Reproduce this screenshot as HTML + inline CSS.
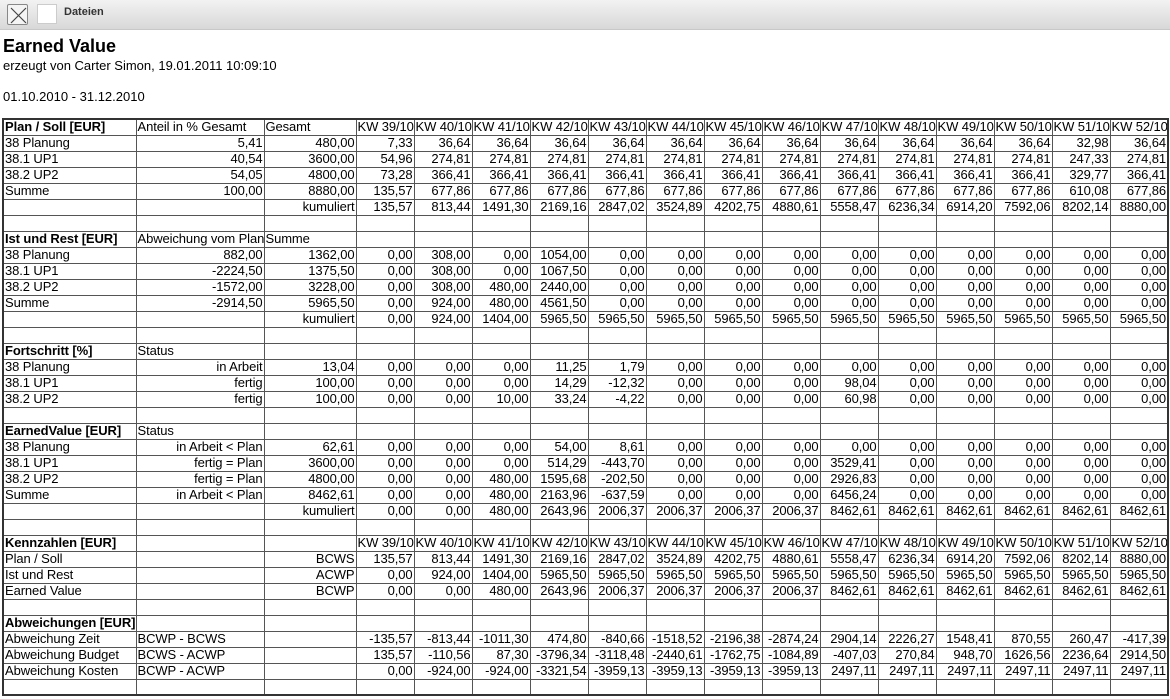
<!DOCTYPE html>
<html><head><meta charset="utf-8">
<style>
*{margin:0;padding:0;box-sizing:border-box}
body{width:1170px;height:699px;overflow:hidden;background:#fff;font-family:"Liberation Sans",sans-serif;font-size:13px;color:#000;position:relative}
.tb{position:absolute;left:0;top:0;width:1170px;height:30px;background:linear-gradient(#f2f2f2,#d8d8d8);border-bottom:1px solid #c8c8c8}
.xb{position:absolute;left:7px;top:4px;width:21px;height:21px;border:1px solid #888;background:#f4f4f4;border-radius:2px}
.wb{position:absolute;left:37px;top:4px;width:20px;height:20px;background:#fff;border:1px solid #ccc}
.tb span{position:absolute;left:64px;top:6px;font-size:11px;font-weight:bold;color:#333}
h1{position:absolute;left:3px;top:36px;font-size:18px;font-weight:bold}
.s1{position:absolute;left:3px;top:58px}
.s2{position:absolute;left:3px;top:89px}
table{position:absolute;left:2px;top:118px;width:1166px;border-collapse:collapse;table-layout:fixed;border:2px solid #333}
td{border:1px solid #555;height:16px;line-height:14px;padding:0 1px;white-space:nowrap;overflow:hidden;text-align:right;letter-spacing:-0.1px}
td.l{text-align:left}
b{font-weight:bold}
</style></head><body>
<div class="tb"><div class="xb"><svg width="21" height="21"><path d="M3 3L18 18M18 3L3 18" stroke="#444" stroke-width="1.2"/></svg></div><div class="wb"></div><span>Dateien</span></div>
<h1>Earned Value</h1>
<div class="s1">erzeugt von Carter Simon, 19.01.2011 10:09:10</div>
<div class="s2">01.10.2010 - 31.12.2010</div>
<table>
<colgroup><col style="width:133px"><col style="width:128px"><col style="width:92px"><col style="width:58px"><col style="width:58px"><col style="width:58px"><col style="width:58px"><col style="width:58px"><col style="width:58px"><col style="width:58px"><col style="width:58px"><col style="width:58px"><col style="width:58px"><col style="width:58px"><col style="width:58px"><col style="width:58px"><col style="width:58px"></colgroup>
<tr><td class="l"><b>Plan / Soll [EUR]</b></td><td class="l">Anteil in % Gesamt</td><td class="l">Gesamt</td><td>KW 39/10</td><td>KW 40/10</td><td>KW 41/10</td><td>KW 42/10</td><td>KW 43/10</td><td>KW 44/10</td><td>KW 45/10</td><td>KW 46/10</td><td>KW 47/10</td><td>KW 48/10</td><td>KW 49/10</td><td>KW 50/10</td><td>KW 51/10</td><td>KW 52/10</td></tr>
<tr><td class="l">38 Planung</td><td>5,41</td><td>480,00</td><td>7,33</td><td>36,64</td><td>36,64</td><td>36,64</td><td>36,64</td><td>36,64</td><td>36,64</td><td>36,64</td><td>36,64</td><td>36,64</td><td>36,64</td><td>36,64</td><td>32,98</td><td>36,64</td></tr>
<tr><td class="l">38.1 UP1</td><td>40,54</td><td>3600,00</td><td>54,96</td><td>274,81</td><td>274,81</td><td>274,81</td><td>274,81</td><td>274,81</td><td>274,81</td><td>274,81</td><td>274,81</td><td>274,81</td><td>274,81</td><td>274,81</td><td>247,33</td><td>274,81</td></tr>
<tr><td class="l">38.2 UP2</td><td>54,05</td><td>4800,00</td><td>73,28</td><td>366,41</td><td>366,41</td><td>366,41</td><td>366,41</td><td>366,41</td><td>366,41</td><td>366,41</td><td>366,41</td><td>366,41</td><td>366,41</td><td>366,41</td><td>329,77</td><td>366,41</td></tr>
<tr><td class="l">Summe</td><td>100,00</td><td>8880,00</td><td>135,57</td><td>677,86</td><td>677,86</td><td>677,86</td><td>677,86</td><td>677,86</td><td>677,86</td><td>677,86</td><td>677,86</td><td>677,86</td><td>677,86</td><td>677,86</td><td>610,08</td><td>677,86</td></tr>
<tr><td></td><td></td><td>kumuliert</td><td>135,57</td><td>813,44</td><td>1491,30</td><td>2169,16</td><td>2847,02</td><td>3524,89</td><td>4202,75</td><td>4880,61</td><td>5558,47</td><td>6236,34</td><td>6914,20</td><td>7592,06</td><td>8202,14</td><td>8880,00</td></tr>
<tr><td></td><td></td><td></td><td></td><td></td><td></td><td></td><td></td><td></td><td></td><td></td><td></td><td></td><td></td><td></td><td></td><td></td></tr>
<tr><td class="l"><b>Ist und Rest [EUR]</b></td><td class="l">Abweichung vom Plan</td><td class="l">Summe</td><td></td><td></td><td></td><td></td><td></td><td></td><td></td><td></td><td></td><td></td><td></td><td></td><td></td><td></td></tr>
<tr><td class="l">38 Planung</td><td>882,00</td><td>1362,00</td><td>0,00</td><td>308,00</td><td>0,00</td><td>1054,00</td><td>0,00</td><td>0,00</td><td>0,00</td><td>0,00</td><td>0,00</td><td>0,00</td><td>0,00</td><td>0,00</td><td>0,00</td><td>0,00</td></tr>
<tr><td class="l">38.1 UP1</td><td>-2224,50</td><td>1375,50</td><td>0,00</td><td>308,00</td><td>0,00</td><td>1067,50</td><td>0,00</td><td>0,00</td><td>0,00</td><td>0,00</td><td>0,00</td><td>0,00</td><td>0,00</td><td>0,00</td><td>0,00</td><td>0,00</td></tr>
<tr><td class="l">38.2 UP2</td><td>-1572,00</td><td>3228,00</td><td>0,00</td><td>308,00</td><td>480,00</td><td>2440,00</td><td>0,00</td><td>0,00</td><td>0,00</td><td>0,00</td><td>0,00</td><td>0,00</td><td>0,00</td><td>0,00</td><td>0,00</td><td>0,00</td></tr>
<tr><td class="l">Summe</td><td>-2914,50</td><td>5965,50</td><td>0,00</td><td>924,00</td><td>480,00</td><td>4561,50</td><td>0,00</td><td>0,00</td><td>0,00</td><td>0,00</td><td>0,00</td><td>0,00</td><td>0,00</td><td>0,00</td><td>0,00</td><td>0,00</td></tr>
<tr><td></td><td></td><td>kumuliert</td><td>0,00</td><td>924,00</td><td>1404,00</td><td>5965,50</td><td>5965,50</td><td>5965,50</td><td>5965,50</td><td>5965,50</td><td>5965,50</td><td>5965,50</td><td>5965,50</td><td>5965,50</td><td>5965,50</td><td>5965,50</td></tr>
<tr><td></td><td></td><td></td><td></td><td></td><td></td><td></td><td></td><td></td><td></td><td></td><td></td><td></td><td></td><td></td><td></td><td></td></tr>
<tr><td class="l"><b>Fortschritt [%]</b></td><td class="l">Status</td><td></td><td></td><td></td><td></td><td></td><td></td><td></td><td></td><td></td><td></td><td></td><td></td><td></td><td></td><td></td></tr>
<tr><td class="l">38 Planung</td><td>in Arbeit</td><td>13,04</td><td>0,00</td><td>0,00</td><td>0,00</td><td>11,25</td><td>1,79</td><td>0,00</td><td>0,00</td><td>0,00</td><td>0,00</td><td>0,00</td><td>0,00</td><td>0,00</td><td>0,00</td><td>0,00</td></tr>
<tr><td class="l">38.1 UP1</td><td>fertig</td><td>100,00</td><td>0,00</td><td>0,00</td><td>0,00</td><td>14,29</td><td>-12,32</td><td>0,00</td><td>0,00</td><td>0,00</td><td>98,04</td><td>0,00</td><td>0,00</td><td>0,00</td><td>0,00</td><td>0,00</td></tr>
<tr><td class="l">38.2 UP2</td><td>fertig</td><td>100,00</td><td>0,00</td><td>0,00</td><td>10,00</td><td>33,24</td><td>-4,22</td><td>0,00</td><td>0,00</td><td>0,00</td><td>60,98</td><td>0,00</td><td>0,00</td><td>0,00</td><td>0,00</td><td>0,00</td></tr>
<tr><td></td><td></td><td></td><td></td><td></td><td></td><td></td><td></td><td></td><td></td><td></td><td></td><td></td><td></td><td></td><td></td><td></td></tr>
<tr><td class="l"><b>EarnedValue [EUR]</b></td><td class="l">Status</td><td></td><td></td><td></td><td></td><td></td><td></td><td></td><td></td><td></td><td></td><td></td><td></td><td></td><td></td><td></td></tr>
<tr><td class="l">38 Planung</td><td>in Arbeit &lt; Plan</td><td>62,61</td><td>0,00</td><td>0,00</td><td>0,00</td><td>54,00</td><td>8,61</td><td>0,00</td><td>0,00</td><td>0,00</td><td>0,00</td><td>0,00</td><td>0,00</td><td>0,00</td><td>0,00</td><td>0,00</td></tr>
<tr><td class="l">38.1 UP1</td><td>fertig = Plan</td><td>3600,00</td><td>0,00</td><td>0,00</td><td>0,00</td><td>514,29</td><td>-443,70</td><td>0,00</td><td>0,00</td><td>0,00</td><td>3529,41</td><td>0,00</td><td>0,00</td><td>0,00</td><td>0,00</td><td>0,00</td></tr>
<tr><td class="l">38.2 UP2</td><td>fertig = Plan</td><td>4800,00</td><td>0,00</td><td>0,00</td><td>480,00</td><td>1595,68</td><td>-202,50</td><td>0,00</td><td>0,00</td><td>0,00</td><td>2926,83</td><td>0,00</td><td>0,00</td><td>0,00</td><td>0,00</td><td>0,00</td></tr>
<tr><td class="l">Summe</td><td>in Arbeit &lt; Plan</td><td>8462,61</td><td>0,00</td><td>0,00</td><td>480,00</td><td>2163,96</td><td>-637,59</td><td>0,00</td><td>0,00</td><td>0,00</td><td>6456,24</td><td>0,00</td><td>0,00</td><td>0,00</td><td>0,00</td><td>0,00</td></tr>
<tr><td></td><td></td><td>kumuliert</td><td>0,00</td><td>0,00</td><td>480,00</td><td>2643,96</td><td>2006,37</td><td>2006,37</td><td>2006,37</td><td>2006,37</td><td>8462,61</td><td>8462,61</td><td>8462,61</td><td>8462,61</td><td>8462,61</td><td>8462,61</td></tr>
<tr><td></td><td></td><td></td><td></td><td></td><td></td><td></td><td></td><td></td><td></td><td></td><td></td><td></td><td></td><td></td><td></td><td></td></tr>
<tr><td class="l"><b>Kennzahlen [EUR]</b></td><td></td><td></td><td>KW 39/10</td><td>KW 40/10</td><td>KW 41/10</td><td>KW 42/10</td><td>KW 43/10</td><td>KW 44/10</td><td>KW 45/10</td><td>KW 46/10</td><td>KW 47/10</td><td>KW 48/10</td><td>KW 49/10</td><td>KW 50/10</td><td>KW 51/10</td><td>KW 52/10</td></tr>
<tr><td class="l">Plan / Soll</td><td></td><td>BCWS</td><td>135,57</td><td>813,44</td><td>1491,30</td><td>2169,16</td><td>2847,02</td><td>3524,89</td><td>4202,75</td><td>4880,61</td><td>5558,47</td><td>6236,34</td><td>6914,20</td><td>7592,06</td><td>8202,14</td><td>8880,00</td></tr>
<tr><td class="l">Ist und Rest</td><td></td><td>ACWP</td><td>0,00</td><td>924,00</td><td>1404,00</td><td>5965,50</td><td>5965,50</td><td>5965,50</td><td>5965,50</td><td>5965,50</td><td>5965,50</td><td>5965,50</td><td>5965,50</td><td>5965,50</td><td>5965,50</td><td>5965,50</td></tr>
<tr><td class="l">Earned Value</td><td></td><td>BCWP</td><td>0,00</td><td>0,00</td><td>480,00</td><td>2643,96</td><td>2006,37</td><td>2006,37</td><td>2006,37</td><td>2006,37</td><td>8462,61</td><td>8462,61</td><td>8462,61</td><td>8462,61</td><td>8462,61</td><td>8462,61</td></tr>
<tr><td></td><td></td><td></td><td></td><td></td><td></td><td></td><td></td><td></td><td></td><td></td><td></td><td></td><td></td><td></td><td></td><td></td></tr>
<tr><td class="l"><b>Abweichungen [EUR]</b></td><td></td><td></td><td></td><td></td><td></td><td></td><td></td><td></td><td></td><td></td><td></td><td></td><td></td><td></td><td></td><td></td></tr>
<tr><td class="l">Abweichung Zeit</td><td class="l">BCWP - BCWS</td><td></td><td>-135,57</td><td>-813,44</td><td>-1011,30</td><td>474,80</td><td>-840,66</td><td>-1518,52</td><td>-2196,38</td><td>-2874,24</td><td>2904,14</td><td>2226,27</td><td>1548,41</td><td>870,55</td><td>260,47</td><td>-417,39</td></tr>
<tr><td class="l">Abweichung Budget</td><td class="l">BCWS - ACWP</td><td></td><td>135,57</td><td>-110,56</td><td>87,30</td><td>-3796,34</td><td>-3118,48</td><td>-2440,61</td><td>-1762,75</td><td>-1084,89</td><td>-407,03</td><td>270,84</td><td>948,70</td><td>1626,56</td><td>2236,64</td><td>2914,50</td></tr>
<tr><td class="l">Abweichung Kosten</td><td class="l">BCWP - ACWP</td><td></td><td>0,00</td><td>-924,00</td><td>-924,00</td><td>-3321,54</td><td>-3959,13</td><td>-3959,13</td><td>-3959,13</td><td>-3959,13</td><td>2497,11</td><td>2497,11</td><td>2497,11</td><td>2497,11</td><td>2497,11</td><td>2497,11</td></tr>
<tr><td></td><td></td><td></td><td></td><td></td><td></td><td></td><td></td><td></td><td></td><td></td><td></td><td></td><td></td><td></td><td></td><td></td></tr>
</table>
</body></html>
